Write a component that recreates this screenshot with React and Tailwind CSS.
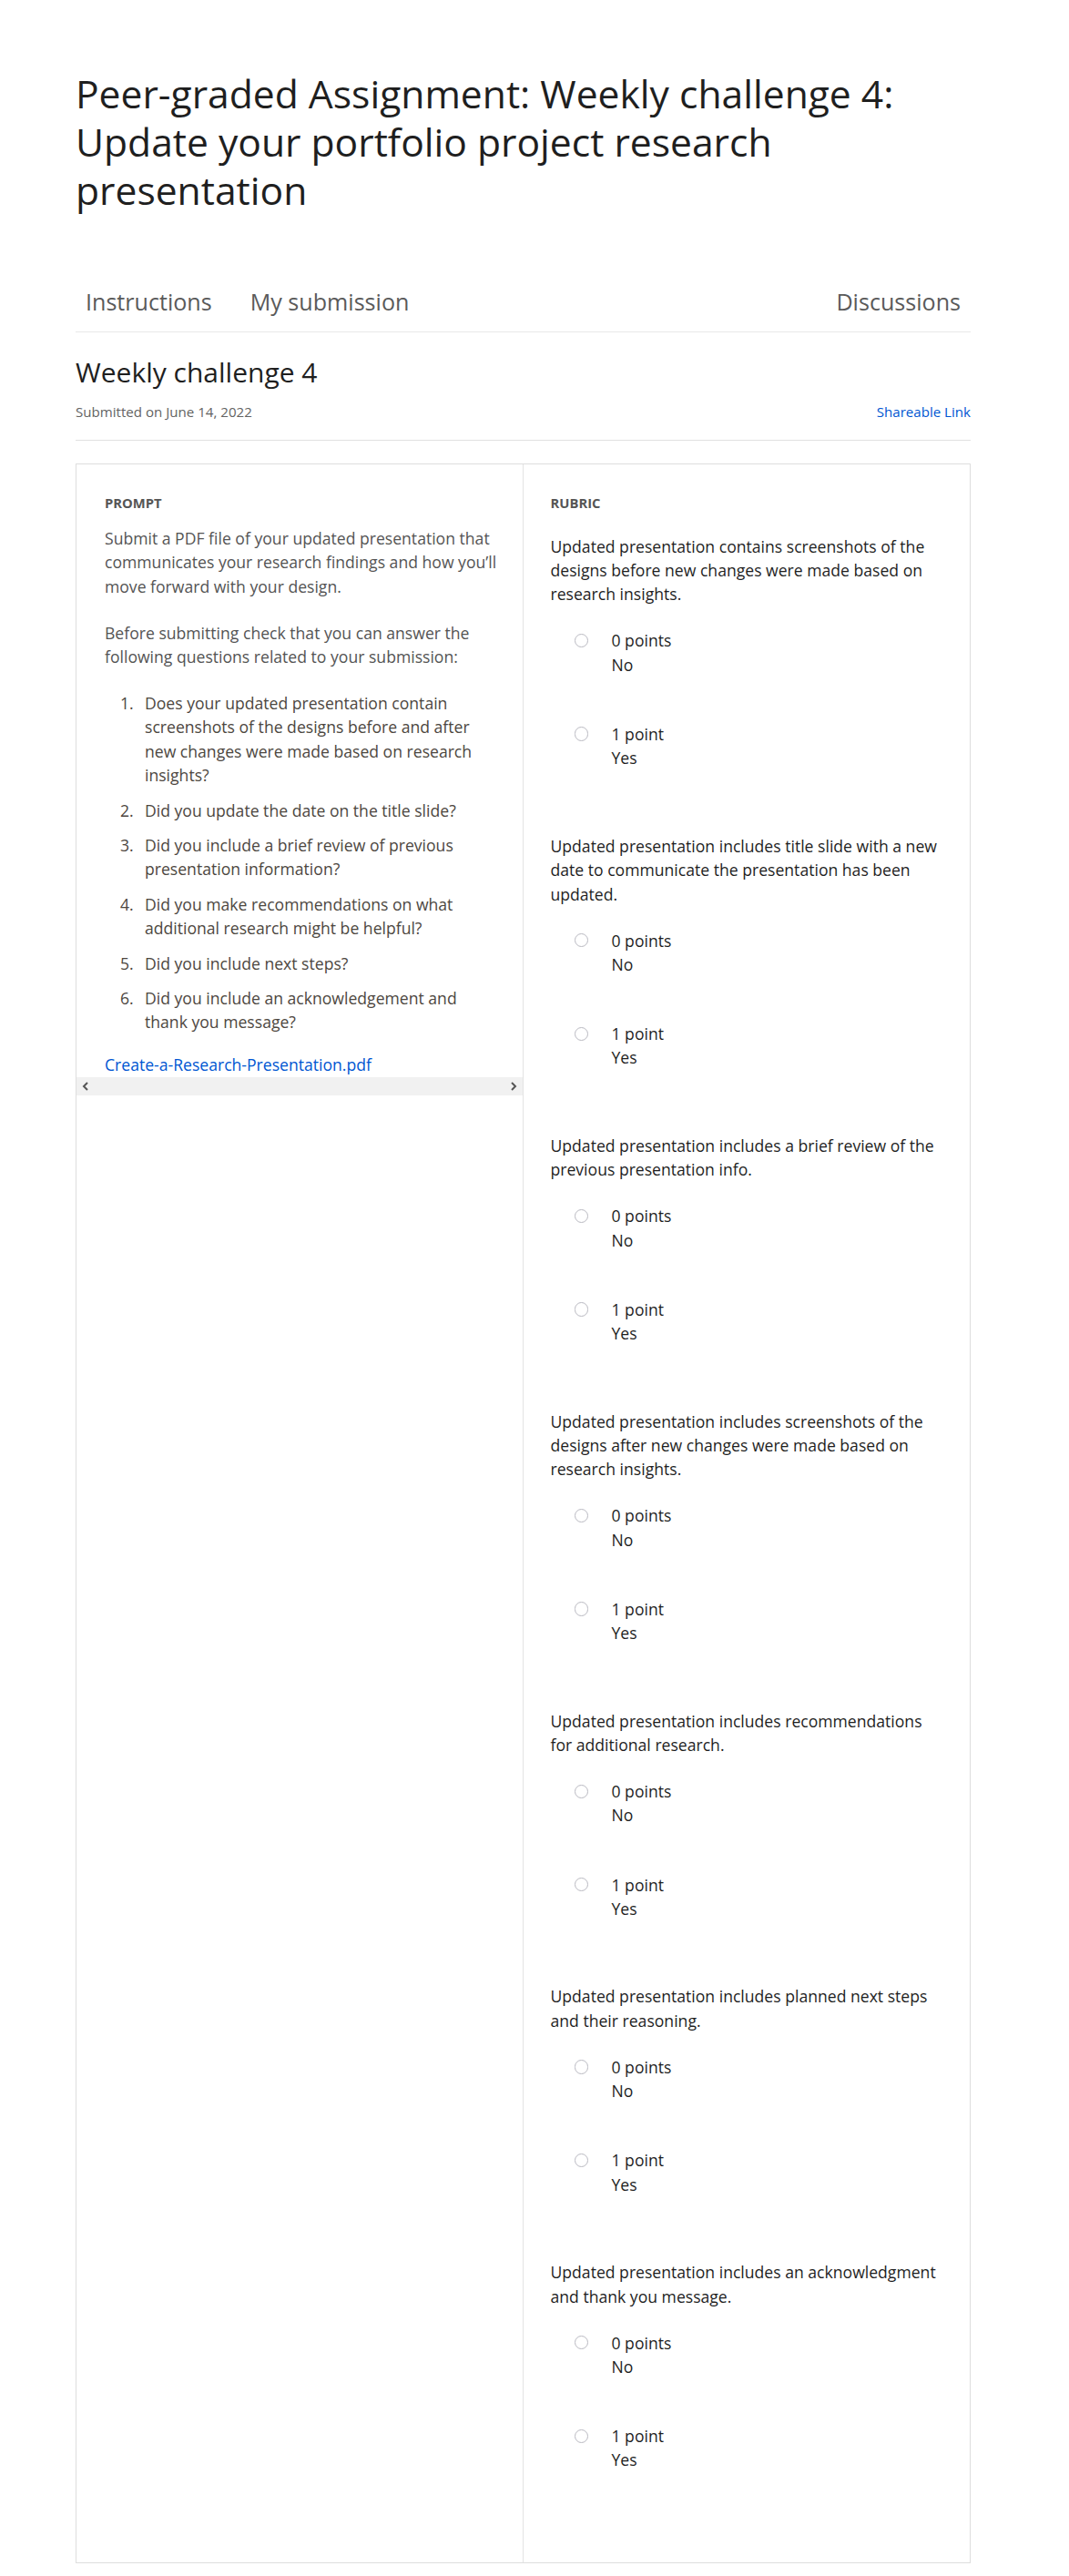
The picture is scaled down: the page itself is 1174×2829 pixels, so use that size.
import React from 'react';

const questions = [
  'Does your updated presentation contain screenshots of the designs before and after new changes were made based on research insights?',
  'Did you update the date on the title slide?',
  'Did you include a brief review of previous presentation information?',
  'Did you make recommendations on what additional research might be helpful?',
  'Did you include next steps?',
  'Did you include an acknowledgement and thank you message?',
];

const criteria = [
  'Updated presentation contains screenshots of the designs before new changes were made based on research insights.',
  'Updated presentation includes title slide with a new date to communicate the presentation has been updated.',
  'Updated presentation includes a brief review of the previous presentation info.',
  'Updated presentation includes screenshots of the designs after new changes were made based on research insights.',
  'Updated presentation includes recommendations for additional research.',
  'Updated presentation includes planned next steps and their reasoning.',
  'Updated presentation includes an acknowledgment and thank you message.',
];

const options = [
  { points: '0 points', label: 'No' },
  { points: '1 point', label: 'Yes' },
];

const Chevron = ({ dir }) => (
  <svg width="8" height="10" viewBox="0 0 8 10" className="text-[#555]">
    <polyline
      points={dir === 'left' ? '6,1 2,5 6,9' : '2,1 6,5 2,9'}
      fill="none"
      stroke="currentColor"
      strokeWidth="2"
    />
  </svg>
);

const Criterion = ({ text }) => (
  <div className="pb-[70px]">
    <p className="text-[17.6px] leading-[26.4px] text-[#1f1f1f]">{text}</p>
    <div className="mt-[24.6px] flex flex-col gap-[49.7px]">
      {options.map((o) => (
        <label key={o.points} className="flex items-start">
          <span className="ml-[26px] mt-[5.5px] h-[15.4px] w-[15.4px] shrink-0 rounded-full border-[1.5px] border-[#b9b9c1] bg-white" />
          <span className="ml-[25.6px] text-[17.6px] leading-[26.4px] text-[#1f1f1f]">
            <span className="block">{o.points}</span>
            <span className="block">{o.label}</span>
          </span>
        </label>
      ))}
    </div>
  </div>
);

export default function App() {
  return (
    <div className="min-h-[2829px] bg-white pb-[17px] font-['Open_Sans','Liberation_Sans',sans-serif]">
      <div className="ml-[83px] w-[983px]">
        <h1 className="pt-[76.4px] pr-[60px] text-[42.6px] font-normal leading-[52.8px] text-[#1f1f1f]">
          Peer-graded Assignment: Weekly challenge 4: Update your portfolio project research presentation
        </h1>

        <nav className="mt-[78px] flex items-end border-b border-[#e8e8e8] pb-[15px]">
          <div className="flex gap-[20px]">
            <span className="px-[11px] text-[25.1px] leading-[36px] text-[#5a5a5a]">Instructions</span>
            <span className="px-[11px] text-[25.1px] leading-[36px] text-[#5a5a5a]">My submission</span>
          </div>
          <span className="ml-auto px-[11px] text-[25.1px] leading-[36px] text-[#5a5a5a]">Discussions</span>
        </nav>

        <div className="border-b border-[#e1e1e1] pb-[20px]">
          <h2 className="mt-[24px] text-[30px] font-normal leading-[40px] text-[#1f1f1f]">Weekly challenge 4</h2>
          <div className="mt-[12px] flex items-center justify-between text-[15.1px] leading-[22px]">
            <span className="text-[#636363]">Submitted on June 14, 2022</span>
            <a className="text-[#0056d2]">Shareable Link</a>
          </div>
        </div>

        <div className="mt-[25px] grid grid-cols-2 border border-[#dedede]">
          <div className="flex flex-col border-r border-[#e3e3e3]">
            <div className="pl-[31px] pr-[24px] pt-[33px]">
              <h3 className="text-[14.8px] font-bold uppercase leading-[18px] text-[#555]">Prompt</h3>
              <div className="mt-[17px] text-[17.6px] leading-[26.4px] text-[#545454]">
                <p>
                  Submit a PDF file of your updated presentation that communicates your research findings and how you’ll
                  move forward with your design.
                </p>
                <p className="mt-[25px]">
                  Before submitting check that you can answer the following questions related to your submission:
                </p>
                <ol className="mt-[24.2px] mr-[7px] flex flex-col gap-[12px] text-[#4d4741]">
                  {questions.map((q, i) => (
                    <li key={q} className="flex">
                      <span className="w-[44px] shrink-0 pl-[17px]">{i + 1}.</span>
                      <span>{q}</span>
                    </li>
                  ))}
                </ol>
                <a className="mt-[20.6px] block text-[#0056d2]">Create-a-Research-Presentation.pdf</a>
              </div>
            </div>
            <div className="flex h-[20px] items-center justify-between bg-[#f1f1f1] px-[6px]">
              <Chevron dir="left" />
              <Chevron dir="right" />
            </div>
          </div>

          <div className="pl-[30px] pr-[30px] pt-[33px] pb-[29px]">
            <h3 className="text-[14.8px] font-bold uppercase leading-[18px] text-[#555]">Rubric</h3>
            <div className="mt-[25.8px]">
              {criteria.map((c) => (
                <Criterion key={c} text={c} />
              ))}
            </div>
          </div>
        </div>
      </div>
    </div>
  );
}
